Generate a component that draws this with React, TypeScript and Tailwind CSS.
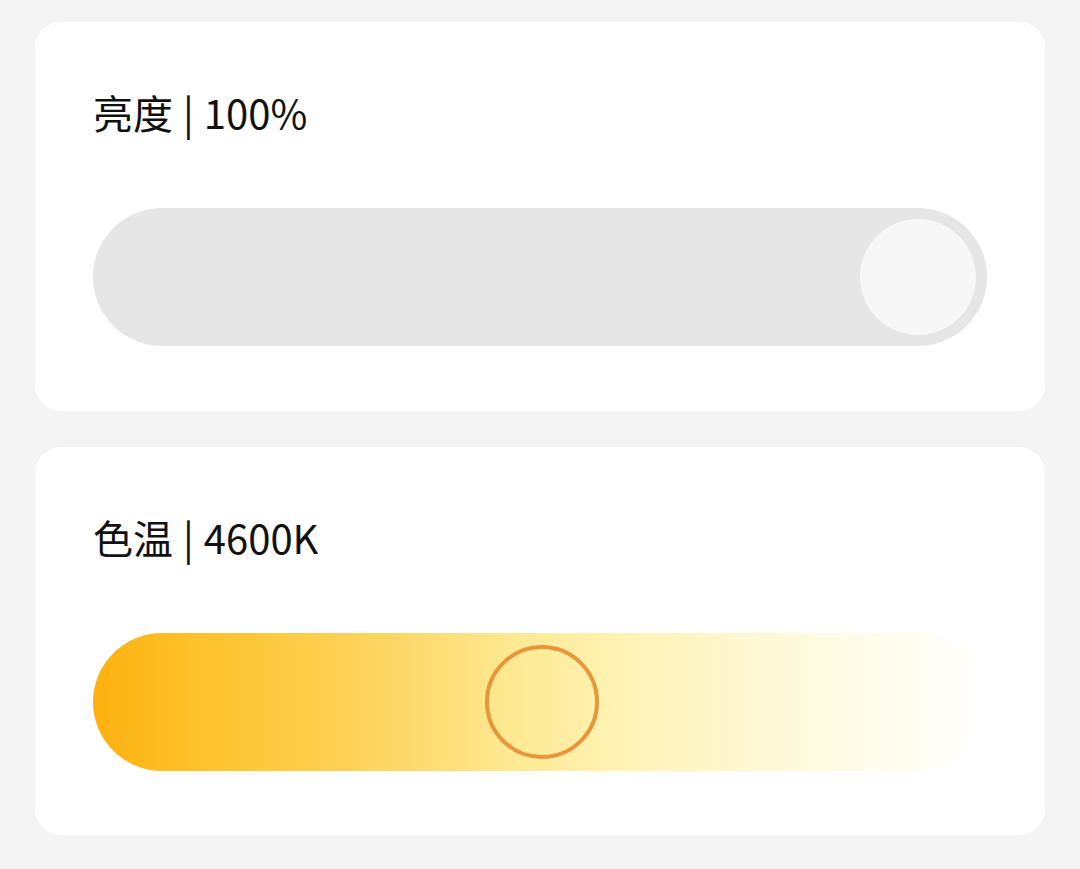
import React from "react";

export default function App() {
  const font = { fontFamily: '"Noto Sans CJK SC", "Noto Sans", sans-serif' };
  return (
    <div className="w-[1080px] h-[869px] bg-[#f4f4f4] pt-[22px] px-[35px] flex flex-col gap-[36px]" style={font}>
      <div className="h-[389px] bg-white rounded-[26px] px-[58px] pt-[88px]">
        <div className="text-[40px] leading-[54px] text-[#111] -mt-[25px] flex items-center">
          <span>亮度</span>
          <span className="mx-[10px]">|</span>
          <span>100%</span>
        </div>
        <div className="mt-[69px] h-[138px] rounded-full bg-[#e6e6e6] flex items-center justify-end pr-[11px]">
          <div className="w-[116px] h-[116px] rounded-full bg-[#f7f7f7]" />
        </div>
      </div>
      <div className="h-[388px] bg-white rounded-[26px] px-[58px] pt-[88px]">
        <div className="text-[40px] leading-[54px] text-[#111] -mt-[25px] flex items-center">
          <span>色温</span>
          <span className="mx-[10px]">|</span>
          <span>4600K</span>
        </div>
        <div className="mt-[69px] h-[138px] rounded-full bg-[linear-gradient(90deg,#fdb10f_0%,#fdc22b_12%,#fdd35a_30%,#feea96_48%,#fff3b6_60%,#fffadf_80%,#ffffff_100%)] flex items-center pl-[392px]">
          <div className="w-[114px] h-[114px] rounded-full border-[4px] border-[#e9963a]" />
        </div>
      </div>
    </div>
  );
}
